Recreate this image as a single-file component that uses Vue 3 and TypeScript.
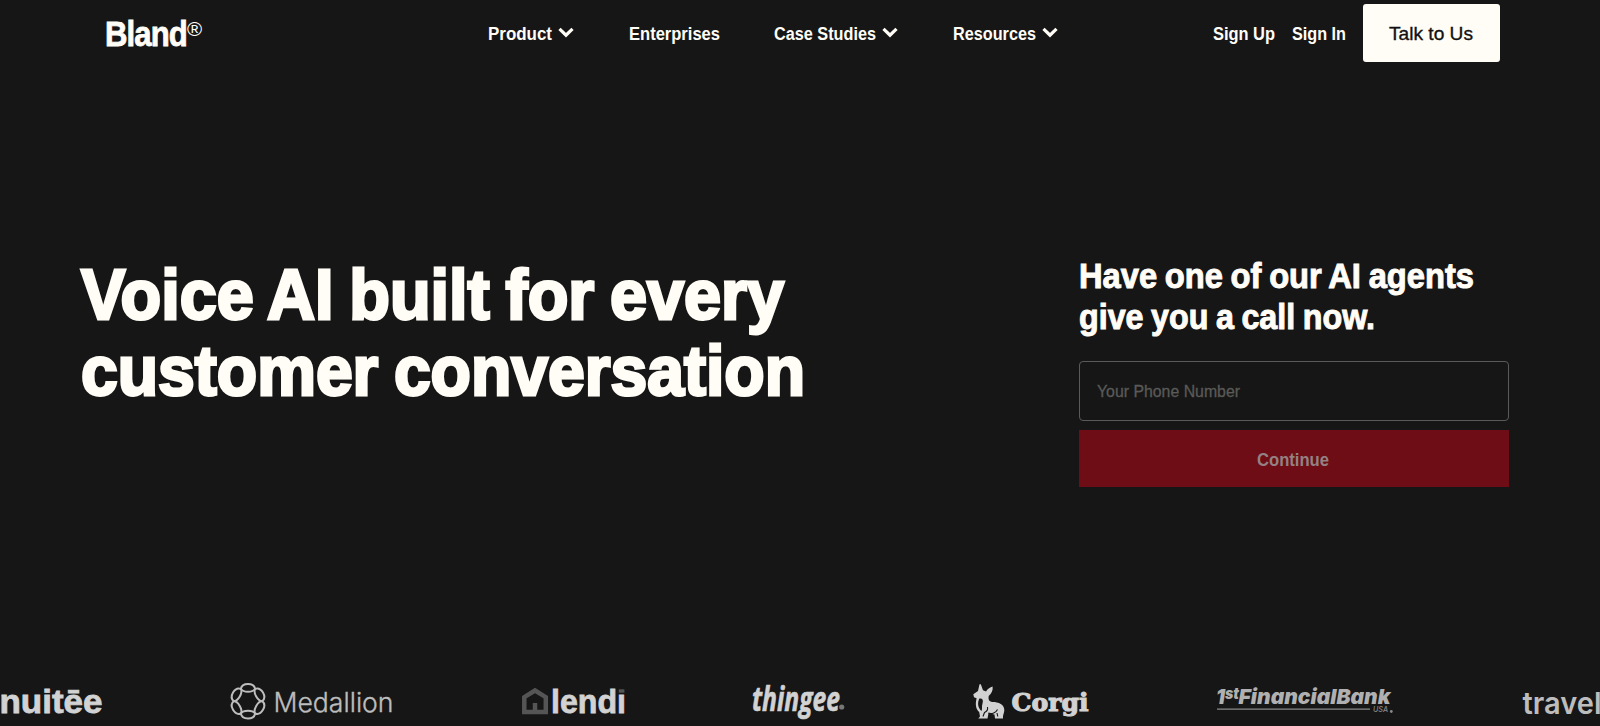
<script setup lang="ts">
import type { Directive } from 'vue'

interface NavItem {
  label: string
  width: number
  menu: boolean
}

// Sets a line of text to a given measure by condensing or widening it.
const vFit: Directive<HTMLElement, number> = {
  mounted(el, { value }) {
    const natural = el.getBoundingClientRect().width
    el.style.transform = `scaleX(${value / natural})`
    el.style.marginRight = `${value - natural}px`
  },
}

const nav: NavItem[] = [
  { label: 'Product', width: 64, menu: true },
  { label: 'Enterprises', width: 91, menu: false },
  { label: 'Case Studies', width: 102, menu: true },
  { label: 'Resources', width: 83, menu: true },
]
const petals = [0, 60, 120, 180, 240, 300]
</script>

<template>
  <div class="page">
    <header class="header">
      <a class="brand"><span v-fit="82" class="fit">Bland</span><span class="reg">®</span></a>
      <nav class="nav">
        <a v-for="item in nav" :key="item.label" class="link">
          <span v-fit="item.width" class="fit">{{ item.label }}</span>
          <svg v-if="item.menu" class="chevron" width="16" height="11" viewBox="0 0 16 11">
            <path d="M1.5 1.8 8 8.2l6.5-6.4" fill="none" stroke="currentColor" stroke-width="3.2" />
          </svg>
        </a>
      </nav>
      <div class="account">
        <a class="link"><span v-fit="62" class="fit">Sign Up</span></a>
        <a class="link"><span v-fit="54" class="fit">Sign In</span></a>
        <button class="talk"><span v-fit="84" class="fit">Talk to Us</span></button>
      </div>
    </header>

    <main class="hero">
      <h1 class="title">
        <span v-fit="703" class="fit">Voice AI built for every</span><br />
        <span v-fit="724" class="fit">customer conversation</span>
      </h1>
      <form class="call" @submit.prevent>
        <h2 class="subtitle">
          <span v-fit="395" class="fit">Have one of our AI agents</span><br />
          <span v-fit="296" class="fit">give you a call now.</span>
        </h2>
        <label class="field"><span v-fit="143" class="fit">Your Phone Number</span></label>
        <button class="continue"><span v-fit="72" class="fit">Continue</span></button>
      </form>
    </main>

    <svg class="clients" width="1600" height="60" viewBox="0 666 1600 60">
      <g class="bright">
        <text class="sans" x="-0.5" y="713" font-size="33" textLength="103" lengthAdjust="spacingAndGlyphs">nuitēe</text>
      </g>

      <g class="mid">
        <g fill="none" stroke="currentColor" stroke-width="2">
          <path v-for="a in petals" :key="a" :transform="`translate(248 701.2) rotate(${a})`"
            d="M-7.2-12.2C-6-19 6-19 7.2-12.2C4.5-8.6-4.5-8.6-7.2-12.2Z" />
        </g>
        <text x="273.5" y="711.8" class="light" font-size="27" textLength="120" lengthAdjust="spacingAndGlyphs">Medallion</text>
      </g>

      <path d="M524.3 712V697.2L535 690.5 545.8 697.2V712Z M535 712V703" fill="none" stroke="#555" stroke-width="4.5" />
      <g class="bright">
        <text class="sans" x="551" y="713" font-size="34" textLength="75" lengthAdjust="spacingAndGlyphs">lendi</text>
        <path d="M617.5 686h10v7.6h-10z" fill="#161616" />
        <path d="M618.8 689.3h5.6v3.4h-5.6z" fill="#555" />
      </g>

      <g class="bright">
        <text class="thingee" x="752" y="711" font-size="34" textLength="88" lengthAdjust="spacingAndGlyphs">thingee</text>
        <circle cx="841.7" cy="707" r="2.6" fill="#777" />
      </g>

      <g class="bright">
        <path d="M973.3 694.3 978 691 979.5 684.3H980.8L983 690.3 986 691.5C988 688.5 990 687 992.6 686.4C993.2 690 991.5 693.5 988.7 696C988 699.5 989 701.5 992 702C999 702 1004.3 704.5 1004.3 710C1004.3 713 1002.8 714.5 1003 718.6H995L994.5 714.5 988.5 713.2 987.5 718.6H978.3L980 716.5 979.2 712C976 709 975 705 976.6 698.2L974 697.3Z" />
        <path d="M979.3 698.5C982.5 698 983.6 700 982.5 703.5C981.5 706 982.6 708.5 981.5 711C977.7 707.5 977.3 703.5 979.3 698.5Z" fill="#161616" />
        <path d="M983 716.5 984.5 712.5C987 711.5 988 709.5 987.5 707M988.3 713C992 714.5 996 712.5 997.5 709.5M997.8 716.5 997 713" fill="none" stroke="#161616" stroke-width="1.1" />
        <text class="slab" x="1011.5" y="711.3" font-size="25" textLength="77" lengthAdjust="spacingAndGlyphs">Corgi</text>
      </g>

      <g class="bank">
        <text x="1216" y="704" font-size="20.5" textLength="9" lengthAdjust="spacingAndGlyphs">1</text>
        <text x="1225" y="698.5" font-size="15" textLength="14" lengthAdjust="spacingAndGlyphs">st</text>
        <text x="1238.5" y="704" font-size="20.5" textLength="152" lengthAdjust="spacingAndGlyphs">FinancialBank</text>
        <path d="M1217 708.4h153v1.3h-153z" fill="#8a8a8a" />
        <text class="usa" x="1373" y="712" font-size="8" textLength="15" lengthAdjust="spacingAndGlyphs">USA</text>
        <circle cx="1391.3" cy="711.5" r="1.4" fill="#888" />
      </g>

      <text class="mid travel" x="1522.5" y="713.5" font-size="30" textLength="79" lengthAdjust="spacingAndGlyphs">travel</text>
    </svg>
  </div>
</template>

<style>
html,
body {
  margin: 0;
  background: #161616;
}
</style>

<style scoped>
.page {
  width: 1600px;
  height: 726px;
  display: flex;
  flex-direction: column;
  overflow: hidden;
  background: #161616;
  color: #fffdf6;
  font-family: "Liberation Sans", Arial, sans-serif;
}
.fit {
  display: inline-block;
  white-space: nowrap;
  transform-origin: 0 50%;
}
.header {
  height: 66px;
  display: flex;
  align-items: center;
  box-sizing: border-box;
  padding: 0 100px 0 105px;
}
.brand {
  width: 383px;
  padding-top: 2px;
  display: flex;
  font-size: 35px;
  line-height: 40px;
  font-weight: 700;
  letter-spacing: -1px;
  -webkit-text-stroke: 0.8px currentColor;
}
.reg {
  margin-top: 3px;
  font-size: 20.5px;
  line-height: 24px;
  font-weight: 400;
  -webkit-text-stroke: 0;
}
.nav {
  display: flex;
  gap: 54.5px;
  flex: 1;
}
.link {
  display: flex;
  align-items: center;
  padding-top: 2px;
  font-size: 18px;
  line-height: 22px;
  font-weight: 700;
}
.chevron {
  margin: 0 0 3px 6px;
}
.account {
  display: flex;
  align-items: center;
  gap: 17px;
}
.talk {
  width: 137px;
  height: 58px;
  border: 0;
  border-radius: 3px;
  padding: 2px 2px 0 0;
  background: #fffdf6;
  color: #111;
  font: 400 19px/22px "Liberation Sans", Arial, sans-serif;
  -webkit-text-stroke: 0.35px currentColor;
}
.hero {
  flex: 1;
  display: flex;
  justify-content: space-between;
  padding: 182px 91px 0 81px;
}
.title {
  margin: 9px 0 0;
  font-size: 71px;
  line-height: 75.6px;
  font-weight: 700;
  word-spacing: -3px;
  -webkit-text-stroke: 3px currentColor;
}
.call {
  width: 430.5px;
  display: flex;
  flex-direction: column;
}
.subtitle {
  margin: 7px 0 0;
  font-size: 35px;
  line-height: 41px;
  font-weight: 700;
  word-spacing: -1.5px;
  -webkit-text-stroke: 1px currentColor;
}
.field {
  height: 60px;
  margin-top: 24px;
  box-sizing: border-box;
  display: flex;
  align-items: center;
  border: 1px solid #5a5a59;
  border-radius: 4px;
  padding: 2px 0 0 17px;
  color: #5a5a58;
  font-size: 17px;
  -webkit-text-stroke: 0.3px currentColor;
}
.continue {
  height: 57px;
  margin-top: 9px;
  padding: 2px 1px 0 0;
  border: 0;
  background: #6e0d16;
  color: #948183;
  font: 700 18px/22px "Liberation Sans", Arial, sans-serif;
}
.clients {
  display: block;
  flex: none;
}
.bright {
  fill: #d2d2d2;
}
.mid {
  color: #bdbdbd;
  fill: #bdbdbd;
}
.sans {
  font-weight: 700;
  stroke: #d2d2d2;
  stroke-width: 0.8px;
}
.light {
  font-family: Inter, sans-serif;
  font-weight: 300;
  stroke: #bdbdbd;
  stroke-width: 0.35px;
}
.thingee {
  font-family: "Open Sans", "Noto Sans", sans-serif;
  font-weight: 700;
  font-style: italic;
  stroke: #d2d2d2;
  stroke-width: 0.7px;
}
.slab {
  font-family: "DejaVu Serif", serif;
  font-weight: 700;
  stroke: #d2d2d2;
  stroke-width: 1.1px;
}
.bank {
  fill: #b0b0b0;
  font-family: Inter, sans-serif;
  font-weight: 900;
  font-style: italic;
}
.usa {
  font-weight: 500;
  fill: #888;
}
.travel {
  font-family: Inter, sans-serif;
  font-weight: 600;
}
</style>
